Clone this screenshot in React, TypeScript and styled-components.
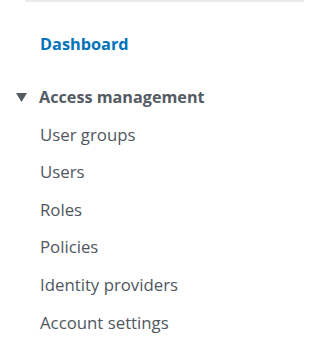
import React from 'react';
import styled, { createGlobalStyle } from 'styled-components';

const GlobalStyle = createGlobalStyle`
  html, body {
    margin: 0;
    padding: 0;
    background: #ffffff;
  }
  body {
    font-family: "Open Sans", "Noto Sans", Arial, sans-serif;
    -webkit-font-smoothing: antialiased;
  }
`;

const Nav = styled.nav`
  width: 326px;
  height: 359px;
  box-sizing: border-box;
  display: flex;
  flex-direction: column;
`;

const TopRule = styled.div`
  margin: 0 22px 0 25px;
  height: 2px;
  background: #e9ebed;
`;

const HomeLink = styled.a`
  display: block;
  margin: 30px 0 0 40px;
  font-size: 16.3px;
  font-weight: 700;
  line-height: 24px;
  color: #0073bb;
  text-decoration: none;
`;

const Section = styled.section`
  margin-top: 29px;
`;

const SectionHeader = styled.div`
  display: flex;
  align-items: center;
  gap: 12px;
  padding-left: 16px;
  font-size: 16.2px;
  font-weight: 700;
  line-height: 24px;
  color: #545b64;
`;

const Caret = styled.svg`
  width: 11px;
  height: 9px;
  flex: none;
`;

const ItemList = styled.ul`
  list-style: none;
  margin: 0;
  padding: 0 0 0 40px;
  display: flex;
  flex-direction: column;
`;

const Item = styled.li`
  font-size: 16.8px;
  line-height: 24px;
  color: #4f5660;
  padding-top: 13.6px;
`;

const items = [
  'User groups',
  'Users',
  'Roles',
  'Policies',
  'Identity providers',
  'Account settings',
];

export default function App() {
  return (
    <>
      <GlobalStyle />
      <Nav>
        <TopRule />
        <HomeLink href="#">Dashboard</HomeLink>
        <Section>
          <SectionHeader>
            <Caret viewBox="0 0 11 9">
              <path d="M0 0 H11 L5.5 9 Z" fill="#545b64" />
            </Caret>
            Access management
          </SectionHeader>
          <ItemList>
            {items.map(label => (
              <Item key={label}>{label}</Item>
            ))}
          </ItemList>
        </Section>
      </Nav>
    </>
  );
}
